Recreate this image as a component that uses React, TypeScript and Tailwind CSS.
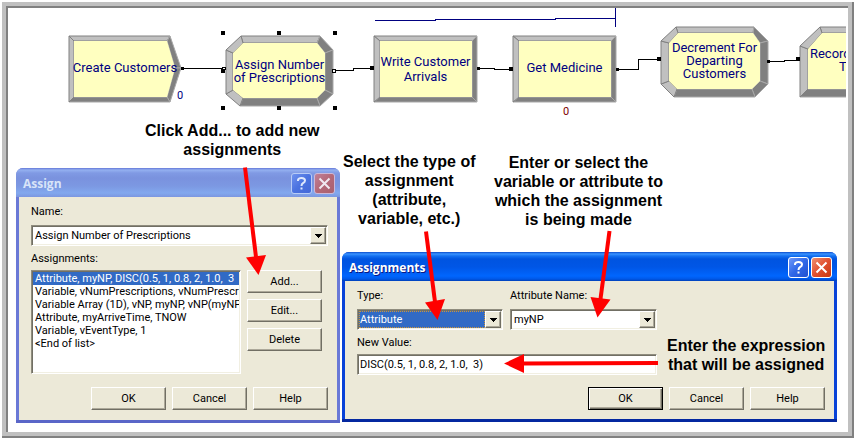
import type { ReactNode } from "react";

type Point = [number, number];

interface FlowNode {
  place: string;
  width: number;
  height: number;
  outer: Point[];
  inner: Point[];
  dark: boolean[];
  leading: string;
  lines: string[];
}

const L = false;
const D = true;

const nodes: FlowNode[] = [
  {
    place: "left-[61px] top-7",
    width: 112,
    height: 66,
    outer: [[0, 0], [101, 0], [112, 32], [101, 66], [0, 66]],
    inner: [[5, 5], [98, 5], [106, 32], [98, 61], [5, 61]],
    dark: [L, D, D, D, L],
    leading: "leading-[15px] pb-1",
    lines: ["Create Customers"],
  },
  {
    place: "left-[218px] top-7",
    width: 107,
    height: 70,
    outer: [[15, 0], [94, 0], [107, 14], [107, 58], [94, 70], [14, 70], [0, 58], [0, 14]],
    inner: [[17, 7], [91, 7], [99, 17], [99, 54], [91, 62], [17, 62], [7, 54], [7, 17]],
    dark: [L, D, D, D, D, L, L, L],
    leading: "leading-[13px]",
    lines: ["Assign Number", "of Prescriptions"],
  },
  {
    place: "left-[366px] top-7",
    width: 103,
    height: 66,
    outer: [[0, 0], [103, 0], [103, 66], [0, 66]],
    inner: [[6, 5], [98, 5], [98, 61], [6, 61]],
    dark: [L, D, D, L],
    leading: "leading-[15px]",
    lines: ["Write Customer", "Arrivals"],
  },
  {
    place: "left-[505px] top-7",
    width: 103,
    height: 66,
    outer: [[0, 0], [103, 0], [103, 66], [0, 66]],
    inner: [[6, 5], [98, 5], [98, 61], [6, 61]],
    dark: [L, D, D, L],
    leading: "leading-[15px] pb-1",
    lines: ["Get Medicine"],
  },
  {
    place: "left-[653px] top-[19px]",
    width: 107,
    height: 70,
    outer: [[15, 0], [93, 0], [107, 14], [107, 57], [94, 70], [13, 70], [0, 57], [0, 14]],
    inner: [[17, 6], [92, 6], [99, 16], [99, 54], [91, 62], [16, 62], [8, 54], [8, 16]],
    dark: [L, D, D, D, D, L, L, L],
    leading: "leading-[13px] pb-1",
    lines: ["Decrement For", "Departing", "Customers"],
  },
  {
    place: "left-[792px] top-[19px]",
    width: 103,
    height: 70,
    outer: [[20, 0], [103, 0], [103, 70], [0, 70], [0, 19]],
    inner: [[22, 6], [96, 6], [96, 62], [8, 62], [8, 22]],
    dark: [L, D, D, L, L],
    leading: "leading-[13px] pb-1 pl-1",
    lines: ["Record System", "Time"],
  },
];

const toPoints = (points: Point[]) => points.map((p) => p.join(",")).join(" ");

function ModuleNode({ node }: { node: FlowNode }) {
  const { outer, inner, dark } = node;
  return (
    <div className={`absolute ${node.place}`}>
      <svg width={node.width} height={node.height} className="block overflow-visible" aria-hidden="true">
        {outer.map((p, i) => {
          const j = (i + 1) % outer.length;
          return (
            <polygon
              key={i}
              points={toPoints([p, outer[j], inner[j], inner[i]])}
              fill={dark[i] ? "#808080" : "#c0c0c0"}
              stroke={dark[i] ? "#a8a8a8" : "#808080"}
              strokeWidth="1"
            />
          );
        })}
        <polygon points={toPoints(inner)} fill="#ffffc0" />
      </svg>
      <div
        className={`absolute inset-0 flex flex-col items-center justify-center whitespace-nowrap font-[Roboto,'Liberation_Sans',sans-serif] text-[13px] text-[#000080] ${node.leading}`}
      >
        {node.lines.map((line) => (
          <span key={line}>{line}</span>
        ))}
      </div>
    </div>
  );
}

function Connectors() {
  const squares: Point[] = [
    [221, 31], [277, 31], [333, 31],
    [221, 106], [277, 106], [333, 106],
    [221, 69], [370, 66], [509, 67], [657, 57], [796, 57],
  ];
  const stubs: Point[] = [[181, 67], [477, 67], [616, 68], [767, 60]];
  return (
    <svg
      viewBox="8 8 838 424"
      className="pointer-events-none absolute left-0 top-0 h-[424px] w-[838px]"
      shapeRendering="crispEdges"
      aria-hidden="true"
    >
      <g fill="none" stroke="#000080" strokeWidth="1">
        <path d="M375 20.5H435V19.5H555V18.5H615" />
        <path d="M615.5 8V27" />
      </g>
      <g fill="none" stroke="#000" strokeWidth="1">
        <path d="M181 68.5H226" />
        <path d="M333 70.5H353.5V68.5H374" />
        <path d="M477 68.5H494.5V69.5H513" />
        <path d="M616 69.5H638.5V59.5H661" />
        <path d="M767 61.5H784.5V60.5H796" />
      </g>
      {squares.map(([x, y]) => (
        <rect key={`${x}-${y}`} x={x} y={y} width="4" height="4" fill="#000" />
      ))}
      {stubs.map(([x, y]) => (
        <rect key={`${x}-${y}`} x={x} y={y} width="3" height="3" fill="#000" />
      ))}
      <rect x="332.5" y="69.5" width="3" height="3" fill="#fff" stroke="#000" />
      <rect x="222.5" y="67.5" width="3" height="2" fill="#fff" stroke="#000" />
    </svg>
  );
}

function CalloutArrows() {
  return (
    <svg
      viewBox="8 8 838 424"
      className="pointer-events-none absolute left-0 top-0 h-[424px] w-[838px]"
      fill="#f00"
      stroke="#f00"
      aria-hidden="true"
    >
      <g strokeWidth="4">
        <path d="M245 167.500L256 257" />
        <path d="M426 231.500L435 302" />
        <path d="M609.500 231L600.500 299" />
        <path d="M658 363L522 363.500" />
      </g>
      <g stroke="none">
        <path d="M246 257.500L266 255L258.500 275Z" />
        <path d="M425 302.500L445 299L437.500 320Z" />
        <path d="M590.500 297L610.500 299.500L597.500 317.500Z" />
        <path d="M524 354V373L504 363.500Z" />
      </g>
    </svg>
  );
}

function Callout({ place, lines }: { place: string; lines: string[] }) {
  return (
    <p className={`absolute flex flex-col items-center whitespace-nowrap text-base font-bold leading-[19px] text-black ${place}`}>
      {lines.map((line) => (
        <span key={line}>{line}</span>
      ))}
    </p>
  );
}

const sunken =
  "border border-t-[#8f8c7e] border-l-[#8f8c7e] border-b-white border-r-white shadow-[inset_1px_1px_0_#716f64,inset_-1px_-1px_0_#f1efe2]";
const raised =
  "border border-t-white border-l-white border-b-[#716f64] border-r-[#716f64] bg-[#ece9d8] shadow-[inset_-1px_-1px_0_#aca899]";

function PushButton({ children, isDefault = false }: { children: ReactNode; isDefault?: boolean }) {
  const edge = isDefault
    ? "border border-black bg-[#ece9d8] shadow-[inset_1px_1px_0_#fff,inset_-1px_-1px_0_#716f64,inset_-2px_-2px_0_#aca899]"
    : raised;
  return (
    <button type="button" className={`h-[23px] w-[75px] text-center text-[11px] leading-[13px] ${edge}`}>
      {children}
    </button>
  );
}

function Combo({ id, value, highlighted = false }: { id: string; value: string; highlighted?: boolean }) {
  return (
    <div className={`relative flex h-[21px] items-stretch bg-white p-px ${sunken}`}>
      <select
        id={id}
        defaultValue={value}
        className={`mr-4 min-w-0 flex-1 appearance-none text-[11px] leading-[13px] outline-none ${
          highlighted ? "border border-dotted border-[#ce9539] bg-[#316ac5] text-white" : "bg-white pl-0.5 text-black"
        }`}
      >
        <option>{value}</option>
      </select>
      <span className={`pointer-events-none absolute inset-y-px right-px flex w-4 items-center justify-center ${raised}`}>
        <svg width="7" height="4" shapeRendering="crispEdges" aria-hidden="true">
          <path d="M0 0H7L3.500 4Z" fill="#000" />
        </svg>
      </span>
    </div>
  );
}

function TitleBar({ title, active }: { title: string; active: boolean }) {
  return (
    <header
      className={`flex h-[29px] items-center gap-0.5 rounded-t-[7px] pl-[7px] pr-[5px] pt-0.5 ${
        active
          ? "bg-[linear-gradient(#0a4ccc_0,#3a93ff_2px,#1470f0_4px,#0054e0_7px,#0056e6_15px,#0066fe_24px,#0058e8_27px,#0040b8_29px)]"
          : "bg-[linear-gradient(#6478d8_0,#94b0f0_2px,#809ae4_5px,#7a92de_10px,#7c98e2_18px,#82a8ee_25px,#7c96e0_29px)]"
      }`}
    >
      <h2
        className={`flex-1 font-['Open_Sans','Noto_Sans',sans-serif] text-xs font-bold leading-4 ${
          active ? "text-white [text-shadow:1px_1px_0_#0a1883]" : "text-[#d8e4f8]"
        }`}
      >
        {title}
      </h2>
      <button
        type="button"
        aria-label="Help for this window"
        className={`flex size-[21px] items-center justify-center rounded-[3px] border ${
          active
            ? "border-white bg-[linear-gradient(135deg,#7098f8,#3068e8_50%,#2050d0)]"
            : "border-[#b8ccf6] bg-[linear-gradient(135deg,#6f92ee,#4a72e0_50%,#4468d8)]"
        }`}
      >
        <svg width="19" height="19" fill="none" stroke={active ? "#fff" : "#dfe8fc"} strokeWidth="2" aria-hidden="true">
          <path d="M6 7V6Q6.500 4 9.500 4Q13 4 13 6.500Q13 8 11 9.200Q9.500 10.200 9.500 12M9.500 13.500V15.500" />
        </svg>
      </button>
      <button
        type="button"
        aria-label="Close"
        className={`flex size-[21px] items-center justify-center rounded-[3px] border ${
          active
            ? "border-white bg-[linear-gradient(135deg,#f09070,#e05030_50%,#c83810)]"
            : "border-[#ccb8d8] bg-[linear-gradient(135deg,#c08098,#b46878_50%,#a86070)]"
        }`}
      >
        <svg width="19" height="19" stroke={active ? "#fff" : "#f0e8f0"} strokeWidth="2" aria-hidden="true">
          <path d="M4.500 4.500L14.500 14.500M14.500 4.500L4.500 14.500" />
        </svg>
      </button>
    </header>
  );
}

const entries = [
  "Attribute, myNP, DISC(0.5, 1, 0.8, 2, 1.0,  3",
  "Variable, vNumPrescriptions, vNumPrescrip",
  "Variable Array (1D), vNP, myNP, vNP(myNP",
  "Attribute, myArriveTime, TNOW",
  "Variable, vEventType, 1",
  "<End of list>",
];

const windowText = "font-[Roboto,'Liberation_Sans',sans-serif] text-[11px] leading-[13px]";

function AssignWindow() {
  return (
    <section
      aria-label="Assign"
      className={`absolute left-2 top-40 w-[324px] rounded-t-[7px] bg-[#6a79d6] ${windowText}`}
    >
      <TitleBar title="Assign" active={false} />
      <div className="mx-[3px] bg-[#ece9d8] pb-2.5 pl-3 pr-[9px] pt-2">
        <label htmlFor="assign-name" className="mb-[7px] block">Name:</label>
        <Combo id="assign-name" value="Assign Number of Prescriptions" />
        <div id="assign-list" className="mb-[5px] mt-[6px]">Assignments:</div>
        <div className="flex gap-1.5">
          <ul
            role="listbox"
            aria-labelledby="assign-list"
            className={`h-[104px] w-[210px] overflow-hidden whitespace-pre bg-white p-px ${sunken}`}
          >
            {entries.map((entry, i) => (
              <li
                key={entry}
                role="option"
                aria-selected={i === 0}
                className={`overflow-hidden pl-0.5 ${i === 0 ? "bg-[#316ac5] text-white" : "text-black"}`}
              >
                {entry}
              </li>
            ))}
          </ul>
          <div className="flex flex-col gap-1.5">
            <PushButton>Add...</PushButton>
            <PushButton>Edit...</PushButton>
            <PushButton>Delete</PushButton>
          </div>
        </div>
        <div className="mt-[13px] flex justify-end gap-1.5">
          <PushButton>OK</PushButton>
          <PushButton>Cancel</PushButton>
          <PushButton>Help</PushButton>
        </div>
      </div>
      <div className="h-[3px] bg-[#5a66c8]" />
    </section>
  );
}

function AssignmentsWindow() {
  return (
    <section
      aria-label="Assignments"
      className={`absolute left-[334px] top-[244px] w-[495px] rounded-t-[7px] bg-[#0842d8] ${windowText}`}
    >
      <TitleBar title="Assignments" active />
      <div className="mx-[3px] bg-[#ece9d8] pb-[9px] pl-3 pr-[9px] pt-2">
        <div className="flex gap-[7px]">
          <div className="w-[146px]">
            <label htmlFor="type" className="mb-[7px] block">Type:</label>
            <Combo id="type" value="Attribute" highlighted />
          </div>
          <div className="w-[147px]">
            <label htmlFor="attribute-name" className="mb-[7px] block">Attribute Name:</label>
            <Combo id="attribute-name" value="myNP" />
          </div>
        </div>
        <label htmlFor="new-value" className="mb-[5px] mt-[6px] block">New Value:</label>
        <input
          id="new-value"
          type="text"
          defaultValue="DISC(0.5, 1, 0.8, 2, 1.0,  3)"
          className={`block h-[21px] w-[300px] bg-white px-0.5 text-[11px] leading-[13px] outline-none ${sunken}`}
        />
        <div className="mt-3 flex justify-end gap-1.5">
          <PushButton isDefault>OK</PushButton>
          <PushButton>Cancel</PushButton>
          <PushButton>Help</PushButton>
        </div>
      </div>
      <div className="h-[3px] bg-[#0428a0]" />
    </section>
  );
}

export default function App() {
  return (
    <main className="bg-white pl-0.5 pt-0.5 font-['Liberation_Sans',Arial,sans-serif] text-black">
      <div className="border-b-2 border-r-2 border-[#808080]">
        <div className="border-4 border-[#c0c0c0]">
          <div className="border-l-2 border-t-2 border-[#808080] pr-0.5">
            <div className="relative min-h-[424px] overflow-hidden bg-white">
              {nodes.map((node) => (
                <ModuleNode key={node.lines[0]} node={node} />
              ))}
              <Connectors />
              <span className={`absolute left-[169px] top-[81px] text-[#000080] ${windowText}`}>0</span>
              <span className={`absolute left-[555px] top-[97px] text-[#800000] ${windowText}`}>0</span>
              <AssignWindow />
              <AssignmentsWindow />
              <Callout place="left-[137px] top-[113px]" lines={["Click Add... to add new", "assignments"]} />
              <Callout
                place="left-[335px] top-36"
                lines={["Select the type of", "assignment", "(attribute,", "variable, etc.)"]}
              />
              <Callout
                place="left-[486px] top-[145px]"
                lines={["Enter or select the", "variable or attribute to", "which the assignment", "is being made"]}
              />
              <Callout place="left-[659px] top-[328px]" lines={["Enter the expression", "that will be assigned"]} />
              <CalloutArrows />
            </div>
          </div>
        </div>
      </div>
    </main>
  );
}
